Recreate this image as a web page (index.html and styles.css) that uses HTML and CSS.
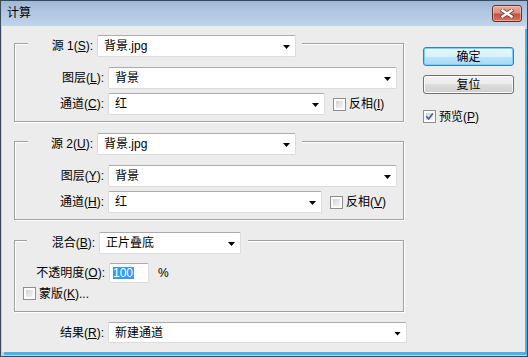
FILE: index.html
```html
<!DOCTYPE html>
<html>
<head>
<meta charset="utf-8">
<title>计算</title>
<link rel="stylesheet" href="styles.css">
</head>
<body>
<div class="window">
  <div class="titlebar">
    <span class="title">计算</span>
    <span class="close">
      <svg width="14" height="9" viewBox="0 0 14 9">
        <path d="M2.5 1.5 L11.5 7.5 M11.5 1.5 L2.5 7.5" stroke="#7b4038" stroke-width="4" stroke-linecap="square" fill="none"/>
        <path d="M2.5 1.5 L11.5 7.5 M11.5 1.5 L2.5 7.5" stroke="#ffffff" stroke-width="2.4" stroke-linecap="square" fill="none"/>
      </svg>
    </span>
  </div>
  <div class="client">
    <div class="main">
      <div class="group">
        <div class="legend">
          <span class="llabel">源 1(<u>S</u>):</span>
          <div class="select w-src">背景.jpg</div>
        </div>
        <div class="rows">
          <div class="row">
            <span class="label">图层(<u>L</u>):</span>
            <div class="select w-long">背景</div>
          </div>
          <div class="row">
            <span class="label">通道(<u>C</u>):</span>
            <div class="select w-ch1">红</div>
            <div class="check gap-l"><span class="box"></span><span>反相(<u>I</u>)</span></div>
          </div>
        </div>
      </div>

      <div class="group g2">
        <div class="legend">
          <span class="llabel">源 2(<u>U</u>):</span>
          <div class="select w-src">背景.jpg</div>
        </div>
        <div class="rows">
          <div class="row">
            <span class="label">图层(<u>Y</u>):</span>
            <div class="select w-long">背景</div>
          </div>
          <div class="row">
            <span class="label">通道(<u>H</u>):</span>
            <div class="select w-ch2">红</div>
            <div class="check gap-l"><span class="box"></span><span>反相(<u>V</u>)</span></div>
          </div>
        </div>
      </div>

      <div class="group g3">
        <div class="legend legend3">
          <span class="llabel llabel3">混合(<u>B</u>):</span>
          <div class="select w-blend">正片叠底</div>
        </div>
        <div class="oprow">
          <span class="label oplabel">不透明度(<u>O</u>):</span>
          <div class="input"><span class="sel">100</span></div>
          <span class="pct">%</span>
        </div>
        <div class="check maskrow"><span class="box"></span><span>蒙版(<u>K</u>)...</span></div>
      </div>

      <div class="row result">
        <span class="label rlabel">结果(<u>R</u>):</span>
        <div class="select w-result">新建通道</div>
      </div>
    </div>

    <div class="side">
      <div class="btn default">确定</div>
      <div class="btn">复位</div>
      <div class="check preview">
        <span class="box checked">
          <svg width="9" height="9" viewBox="0 0 9 9"><path d="M1.2 4.3 L3.6 7 L7.8 1.4" stroke="#4a5f8e" stroke-width="1.7" fill="none"/></svg>
        </span>
        <span>预览(<u>P</u>)</span>
      </div>
    </div>
  </div>
</div>
</body>
</html>
```

FILE: styles.css
```css
* { box-sizing: border-box; }
html, body { margin: 0; padding: 0; }
body {
  width: 528px;
  height: 357px;
  overflow: hidden;
  font-family: "Liberation Sans", "Noto Sans CJK SC", sans-serif;
  font-size: 12px;
  color: #000;
}
u { text-decoration: underline; text-underline-offset: 1px; }

.window {
  width: 528px;
  height: 357px;
  display: flex;
  flex-direction: column;
  background: linear-gradient(to bottom, #9db6d5 0, #aec5e1 10px, #c0d4ea 26px, #b9d3ec 100%);
  box-shadow: inset 0 0 0 1px #3a4756;
}

.titlebar {
  height: 26px;
  flex: none;
  display: flex;
  justify-content: space-between;
  align-items: flex-start;
}
.title {
  padding: 7px 0 0 7px;
  line-height: 13px;
}
.close {
  margin: 5px 6px 0 0;
  width: 30px;
  height: 17px;
  border: 1px solid #6e2b22;
  border-radius: 3px;
  background: linear-gradient(to bottom, #e8ac9f 0, #d98f80 45%, #c4533f 55%, #d4735f 100%);
  box-shadow: inset 0 0 0 1px rgba(255, 230, 220, 0.45);
  display: flex;
  align-items: center;
  justify-content: center;
}

.client {
  flex: 1;
  margin: 0 3px 5px 2px;
  background: #ececec;
  display: flex;
  box-shadow: 2px 3px 0 #45b4e6;
}

.main {
  flex: none;
  width: 402px;
  padding: 17px 0 0 12px;
}

.group {
  width: 390px;
  border: 1px solid #a0a0a0;
  box-shadow: inset 1px 1px 0 #fff, 1px 1px 0 #fff;
  padding-bottom: 6px;
}
.g2 { margin-top: 19px; }
.g3 { margin-top: 20px; padding-bottom: 11px; }

.legend {
  display: flex;
  align-items: center;
  width: max-content;
  height: 22px;
  margin: -9px 0 0 13px;
  padding-right: 6px;
  background: #ececec;
}
.legend3 { margin-left: 12px; padding-right: 7px; }
.llabel {
  width: 65px;
  margin-right: 4px;
  text-align: right;
  white-space: nowrap;
  line-height: 14px;
}
.llabel3 { width: 68px; }

.rows {
  margin-top: 10px;
  display: flex;
  flex-direction: column;
  gap: 4px;
}
.row {
  display: flex;
  align-items: center;
  height: 22px;
}
.label {
  width: 89px;
  margin-right: 4px;
  text-align: right;
  white-space: nowrap;
  line-height: 14px;
  flex: none;
}

.select {
  height: 22px;
  flex: none;
  display: flex;
  align-items: center;
  background: #fff;
  border: 1px solid #dcdcdc;
  border-top-color: #ababab;
  border-radius: 2px;
  padding-left: 6px;
  line-height: 14px;
  white-space: nowrap;
}
.select::after {
  content: "";
  width: 7px;
  height: 4px;
  margin: 2px 5px 0 auto;
  background: #000;
  clip-path: polygon(0 0, 100% 0, 50% 100%);
}
.w-src { width: 199px; }
.w-long { width: 289px; }
.w-ch1 { width: 217px; }
.w-ch2 { width: 214px; }
.w-blend { width: 142px; }
.w-result { width: 299px; height: 21px; }

.check {
  display: flex;
  align-items: center;
  gap: 3px;
  line-height: 14px;
  white-space: nowrap;
}
.gap-l { margin-left: 8px; }
.box {
  width: 13px;
  height: 13px;
  flex: none;
  border: 1px solid #8e8f8f;
  padding: 1px;
  background: linear-gradient(135deg, #c9cbcd 0, #e4e5e6 50%, #f7f7f7 100%) content-box, #f6f6f6;
  box-shadow: inset 0 0 0 2px #fbfbfb;
  display: flex;
  align-items: center;
  justify-content: center;
}
.box.checked svg { display: block; }

.oprow {
  display: flex;
  align-items: center;
  height: 20px;
  margin-top: 9px;
}
.oplabel { width: 90px; }
.input {
  width: 40px;
  height: 20px;
  flex: none;
  background: #fff;
  border: 1px solid #dcdcdc;
  border-top-color: #ababab;
  border-radius: 2px;
  padding-left: 3px;
  display: flex;
  align-items: center;
}
.sel {
  background: #3399ff;
  color: #fff;
  line-height: 12px;
  padding-right: 1px;
}
.pct { margin-left: 9px; line-height: 14px; }

.maskrow {
  height: 13px;
  margin-top: 4px;
  padding-left: 8px;
}

.result { margin-top: 10px; height: 21px; }
.rlabel { width: 90px; }

.side {
  flex: none;
  margin-left: 19px;
  padding-top: 21px;
  display: flex;
  flex-direction: column;
}
.btn {
  width: 91px;
  height: 19px;
  border: 1px solid #707070;
  border-radius: 3px;
  display: flex;
  align-items: center;
  justify-content: center;
  line-height: 14px;
  background: linear-gradient(to bottom, #f2f2f2 0, #ebebeb 50%, #dddddd 50%, #cfcfcf 100%);
  box-shadow: inset 0 0 0 1px #fbfbfb;
}
.btn + .btn { margin-top: 9px; }
.btn.default {
  border-color: #3c7fb1;
  background: linear-gradient(to bottom, #eaf6fd 0, #d9f0fc 50%, #bee6fd 50%, #a7d9f5 100%);
  box-shadow: inset 0 0 0 1px #6fd3fb;
}
.preview { margin-top: 16px; height: 13px; }
```
